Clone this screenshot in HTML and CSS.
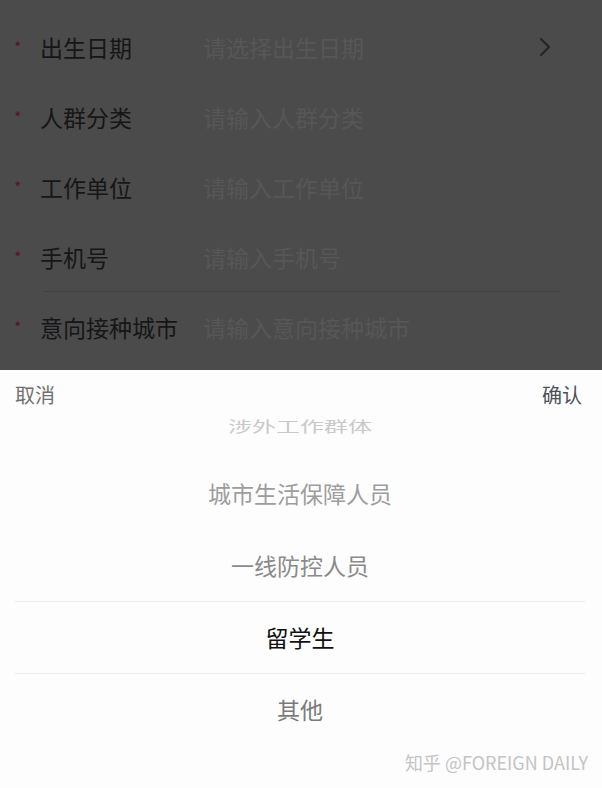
FILE: index.html
```html
<!DOCTYPE html>
<html lang="zh">
<head>
<meta charset="utf-8">
<link rel="stylesheet" href="styles.css">
</head>
<body>
<div class="screen">
  <div class="form">
    <div class="row">
      <span class="req">*</span>
      <span class="label">出生日期</span>
      <span class="ph">请选择出生日期</span>
      <svg class="chev" width="14" height="22" viewBox="0 0 14 22"><path d="M3 3 L11 11 L3 19" fill="none" stroke="#262626" stroke-width="2.2" stroke-linecap="round" stroke-linejoin="round"/></svg>
    </div>
    <div class="row">
      <span class="req">*</span>
      <span class="label">人群分类</span>
      <span class="ph">请输入人群分类</span>
    </div>
    <div class="row">
      <span class="req">*</span>
      <span class="label">工作单位</span>
      <span class="ph">请输入工作单位</span>
    </div>
    <div class="row row-line">
      <span class="req">*</span>
      <span class="label">手机号</span>
      <span class="ph">请输入手机号</span>
    </div>
    <div class="row">
      <span class="req">*</span>
      <span class="label">意向接种城市</span>
      <span class="ph">请输入意向接种城市</span>
    </div>
  </div>
  <div class="picker">
    <div class="picker-head">
      <span class="cancel">取消</span>
      <span class="confirm">确认</span>
    </div>
    <div class="opts">
      <div class="opt opt-far"><span>涉外工作群体</span></div>
      <div class="opt opt-mid">城市生活保障人员</div>
      <div class="opt opt-near">一线防控人员</div>
      <div class="opt opt-sel">留学生</div>
      <div class="opt opt-next">其他</div>
    </div>
    <div class="wm">知乎 @FOREIGN DAILY</div>
  </div>
</div>
</body>
</html>
```
FILE: styles.css
```css
html, body {
  margin: 0;
  padding: 0;
}
body {
  width: 602px;
  height: 788px;
  overflow: hidden;
  font-family: "Noto Sans CJK SC", "Noto Sans", sans-serif;
  background: #fff;
}
.screen {
  display: flex;
  flex-direction: column;
  height: 788px;
}
.form {
  height: 370px;
  box-sizing: border-box;
  padding-top: 12px;
  background: #4b4b4b;
}
.row {
  height: 70px;
  display: flex;
  align-items: center;
  position: relative;
}
.row-line::after {
  content: "";
  position: absolute;
  left: 44px;
  right: 42px;
  bottom: 0;
  height: 1px;
  background: #414141;
}
.req {
  width: 40px;
  padding-left: 14px;
  box-sizing: border-box;
  color: #5c1424;
  font-size: 16px;
  line-height: 1;
  margin-top: 0;
}
.label {
  width: 164px;
  color: #161616;
  font-size: 23px;
  line-height: 1;
}
.ph {
  flex: 1;
  color: #575757;
  font-size: 23px;
  line-height: 1;
  margin-left: -1px;
}
.chev {
  margin-right: 50px;
}
.picker {
  flex: 1;
  display: flex;
  flex-direction: column;
  background: #fdfdfd;
}
.picker-head {
  height: 48px;
  display: flex;
  justify-content: space-between;
  align-items: center;
  padding: 0 20px 0 15px;
  font-size: 20px;
}
.cancel {
  color: #707070;
}
.confirm {
  color: #4a4f5a;
}
.opts {
  display: flex;
  flex-direction: column;
  padding: 0 17px 0 15px;
}
.opt {
  height: 72px;
  display: flex;
  align-items: center;
  justify-content: center;
  font-size: 23px;
  line-height: 1;
}
.opt-far {
  height: 39px;
  align-items: flex-start;
  color: #c9c9c9;
  font-size: 24px;
}
.opt-far span {
  display: block;
  transform: scaleY(0.6);
  transform-origin: top center;
  margin-top: 1px;
}
.opt-mid {
  color: #9d9d9d;
}
.opt-near {
  color: #8a8a8a;
}
.opt-sel {
  color: #111;
  border-top: 1px solid #ececec;
  border-bottom: 1px solid #ececec;
  height: 71px;
}
.opt-next {
  color: #7a7a7a;
  height: 71px;
}
.wm {
  display: flex;
  justify-content: flex-end;
  padding: 4px 14px 0 0;
  font-family: "Noto Sans CJK SC", "Liberation Sans", sans-serif;
  font-size: 18px;
  color: #c4c4c4;
}
```
